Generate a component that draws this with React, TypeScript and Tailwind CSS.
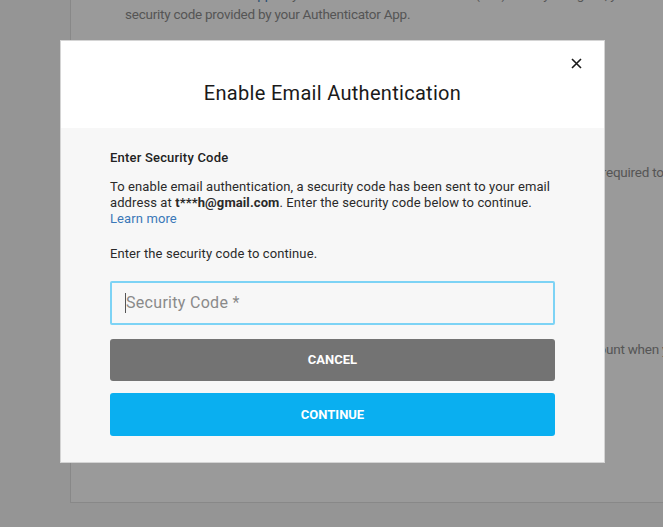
import React from "react";

export default function App() {
  const font = { fontFamily: "Roboto, 'Noto Sans', 'Liberation Sans', sans-serif" };
  return (
    <div className="relative h-[527px] w-[663px] overflow-hidden bg-[#959595]" style={font}>
      {/* background page */}
      <div className="ml-[70px] flex h-[503px] w-[700px] flex-col border-b border-l border-[#888888] bg-[#9a9a9a]">
        <div className="-mt-[16px] pl-[54px] text-[13.5px] leading-5 tracking-[-0.25px] text-[#555555]">
          <p className="whitespace-nowrap">
            Use an <span className="text-[#2a4f73]">Authenticator App</span> as your Two-Factor Authentication (2FA) when you sign in, you'll be
          </p>
          <p className="whitespace-nowrap">security code provided by your Authenticator App.</p>
          <p className="mt-[138px] flex whitespace-nowrap">
            <span className="w-[481px] shrink-0 text-right">An additional security code is sent whenever it is r</span>
            <span>equired to sign in.</span>
          </p>
          <p className="mt-[157px] flex whitespace-nowrap">
            <span className="w-[481px] shrink-0 text-right">The code will be sent to the email of your acco</span>
            <span>unt when you sign in.</span>
          </p>
        </div>
      </div>

      {/* modal */}
      <div className="absolute left-[60px] top-[40px] flex h-[423px] w-[545px] flex-col border border-[#d4d4d4] bg-[#f7f7f7]">
        <div className="relative flex h-[87px] shrink-0 items-center justify-center bg-white pt-[16px]">
          <h2 className="text-[20px] font-normal tracking-[0.3px] text-[#1a1a1a]">Enable Email Authentication</h2>
          <button className="absolute right-[22px] top-[16px] flex h-[12px] w-[12px] items-center justify-center">
            <svg width="11" height="11" viewBox="0 0 11 11">
              <path d="M1 1 L10 10 M10 1 L1 10" stroke="#1a1a1a" strokeWidth="1.6" />
            </svg>
          </button>
        </div>
        <div className="flex flex-1 flex-col px-[49px] pt-[22px] pb-[28px]">
          <h3 className="text-[13px] font-medium leading-4 tracking-[0.2px] text-[#222222]">Enter Security Code</h3>
          <p className="mt-[13px] text-[13px] leading-4 tracking-[0.1px] text-[#2a2a2a]">
            To enable email authentication, a security code has been sent to your email address at{" "}
            <span className="font-bold">t***h@gmail.com</span>. Enter the security code below to continue.
            <br />
            <span className="text-[#3a78b8]">Learn more</span>
          </p>
          <p className="mt-[19px] text-[13px] leading-4 tracking-[0.1px] text-[#2a2a2a]">
            Enter the security code to continue.
          </p>
          <div className="mt-[19px] flex h-[44px] items-center rounded-[2px] border-2 border-[#7dd3f5] pl-[13px]">
            <span className="h-[20px] w-[1px] bg-[#555555]" />
            <span className="text-[16px] tracking-[0.3px] text-[#8a8a8a]">Security Code *</span>
          </div>
          <button className="mt-[14px] flex h-[42px] items-center justify-center rounded-[3px] bg-[#737373] text-[13px] font-bold text-white">
            CANCEL
          </button>
          <button className="mt-[12px] flex h-[43px] items-center justify-center rounded-[3px] bg-[#0aaff0] text-[13px] font-bold text-white">
            CONTINUE
          </button>
        </div>
      </div>
    </div>
  );
}
